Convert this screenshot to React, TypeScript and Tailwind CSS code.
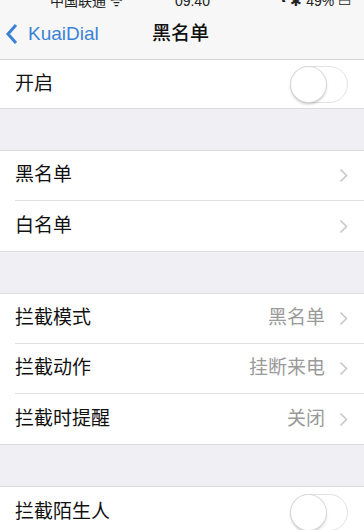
import React, { useState } from "react";

const font = {
  fontFamily: '"Helvetica Neue", "Liberation Sans", "Noto Sans CJK SC", sans-serif',
};

function Chevron() {
  return (
    <svg width="9" height="15" viewBox="0 0 9 15" className="shrink-0">
      <path d="M1.5 1.5 L7.5 7.5 L1.5 13.5" fill="none" stroke="#c7c7cc" strokeWidth="1.6" />
    </svg>
  );
}

function Toggle({ on, onChange }: { on: boolean; onChange: (v: boolean) => void }) {
  return (
    <button
      onClick={() => onChange(!on)}
      className={`relative flex h-[37px] w-[58px] items-center rounded-full border ${
        on ? "border-[#4cd964] bg-[#4cd964]" : "border-[#e3e3e3] bg-white"
      }`}
    >
      <span
        className={`h-[35px] w-[35px] rounded-full bg-white shadow-[0_2px_3px_rgba(0,0,0,0.25)] ring-1 ring-[#d8d8d8] ${
          on ? "ml-[21px]" : "ml-0"
        }`}
      />
    </button>
  );
}

function Row({
  label,
  value,
  last,
  children,
  h = "h-[50px]",
}: {
  label: string;
  value?: string;
  last?: boolean;
  children?: React.ReactNode;
  h?: string;
}) {
  return (
    <div className="bg-white pl-[15px]">
      <div
        className={`flex ${h} items-center pr-[16px] ${last ? "" : "border-b border-[#e0e0e0]"}`}
      >
        <span className="flex-1 text-[19px] text-[#111]">{label}</span>
        {children ?? (
          <div className="flex items-center gap-[14px]">
            {value && <span className="text-[19px] text-[#9a9a9a]">{value}</span>}
            <Chevron />
          </div>
        )}
      </div>
    </div>
  );
}

function Gap() {
  return <div className="h-[42px] border-b border-[#dcdcdc] bg-[#efeff4]" />;
}

export default function App() {
  const [enabled, setEnabled] = useState(false);
  const [stranger, setStranger] = useState(false);

  return (
    <div className="h-[530px] w-[364px] overflow-hidden bg-[#efeff4]" style={font}>
      <div className="border-b border-[#d4d4d4] bg-[#f7f7f7]">
        <div className="h-[9px] overflow-hidden">
          <div className="-mt-[9px] flex items-center text-[14px] text-[#222]">
            <span className="ml-[50px]">中国联通 ᯤ</span>
            <span className="ml-[52px]">09:40</span>
            <span className="ml-[68px]">◔ ✱ 49% ▭</span>
          </div>
        </div>
        <div className="flex h-[50px] items-center">
          <div className="flex w-[120px] items-center pl-[5px] text-[#3b82d6]">
            <svg width="14" height="22" viewBox="0 0 14 22">
              <path d="M11 2 L3 11 L11 20" fill="none" stroke="#3b82d6" strokeWidth="3" />
            </svg>
            <span className="ml-[9px] text-[19px]">KuaiDial</span>
          </div>
          <span className="ml-[32px] text-[19px] font-medium text-[#111]">黑名单</span>
        </div>
      </div>

      <div className="border-b border-[#dcdcdc]">
        <Row label="开启" last h="h-[48px]">
          <Toggle on={enabled} onChange={setEnabled} />
        </Row>
      </div>
      <Gap />
      <div className="border-b border-[#dcdcdc]">
        <Row label="黑名单" />
        <Row label="白名单" last />
      </div>
      <Gap />
      <div className="border-b border-[#dcdcdc]">
        <Row label="拦截模式" value="黑名单" />
        <Row label="拦截动作" value="挂断来电" />
        <Row label="拦截时提醒" value="关闭" last />
      </div>
      <Gap />
      <Row label="拦截陌生人" last>
        <Toggle on={stranger} onChange={setStranger} />
      </Row>
    </div>
  );
}
